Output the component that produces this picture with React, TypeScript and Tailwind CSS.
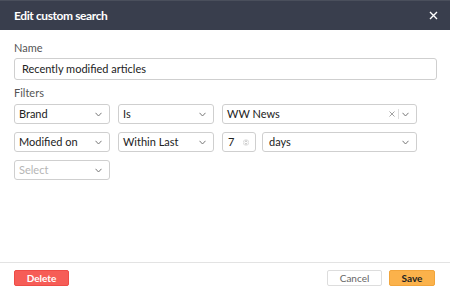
import React from "react";

const Chevron = () => (
  <svg width="7" height="5" viewBox="0 0 7 5" className="shrink-0">
    <path d="M0.5 0.8 L3.5 4 L6.5 0.8" fill="none" stroke="#777" strokeWidth="1" />
  </svg>
);

const Select = ({ value, placeholder, className }: { value?: string; placeholder?: string; className: string }) => (
  <div className={`h-[20px] flex items-center justify-between rounded-[3px] border border-[#cfcfcf] bg-white pl-[4px] pr-[7px] ${className}`}>
    <span className={value ? "text-[#222]" : "text-[#b5b5b5]"}>{value ?? placeholder}</span>
    <Chevron />
  </div>
);

export default function App() {
  return (
    <div className="w-[450px] h-[293px] bg-white flex flex-col text-[11px]" style={{ fontFamily: "Lato, 'Open Sans', sans-serif" }}>
      <div className="h-[30px] bg-[#393e4d] border-t border-[#4a4f5c] flex items-center justify-between pl-[14px] pr-[12px]">
        <span className="text-white font-bold text-[12px] tracking-[-0.4px]">Edit custom search</span>
        <svg width="9" height="9" viewBox="0 0 9 9">
          <path d="M1 1 L8 8 M8 1 L1 8" stroke="#fff" strokeWidth="1.4" />
        </svg>
      </div>
      <div className="flex-1 flex flex-col px-[14px] pt-[11px]">
        <div className="text-[#555] leading-[14px]">Name</div>
        <div className="mt-[3px] h-[22px] w-[423px] rounded-[3px] border border-[#cfcfcf] flex items-center pl-[7px] text-[#222]">
          Recently modified articles
        </div>
        <div className="mt-[6px] text-[#555] leading-[14px]">Filters</div>
        <div className="mt-[4px] flex flex-col gap-[8px]">
          <div className="flex items-center">
            <Select value="Brand" className="w-[96px]" />
            <Select value="Is" className="w-[96px] ml-[8px]" />
            <div className="ml-[8px] w-[195px] h-[20px] flex items-center justify-between rounded-[3px] border border-[#cfcfcf] pl-[4px] pr-[7px]">
              <span className="text-[#222]">WW News</span>
              <div className="flex items-center gap-[3px]">
                <svg width="6" height="6" viewBox="0 0 6 6">
                  <path d="M0.5 0.5 L5.5 5.5 M5.5 0.5 L0.5 5.5" stroke="#999" strokeWidth="0.9" />
                </svg>
                <div className="w-px h-[10px] bg-[#ddd]" />
                <Chevron />
              </div>
            </div>
          </div>
          <div className="flex items-center">
            <Select value="Modified on" className="w-[96px]" />
            <Select value="Within Last" className="w-[96px] ml-[8px]" />
            <div className="ml-[8px] w-[34px] h-[20px] flex items-center justify-between rounded-[3px] border border-[#cfcfcf] pl-[5px] pr-[6px]">
              <span className="text-[#222]">7</span>
              <svg width="6" height="9" viewBox="0 0 6 9">
                <circle cx="3" cy="4.5" r="2.8" fill="none" stroke="#ccc" strokeWidth="0.6" />
                <path d="M1.8 3.8 L3 2.7 L4.2 3.8 M1.8 5.2 L3 6.3 L4.2 5.2" fill="none" stroke="#999" strokeWidth="0.7" />
              </svg>
            </div>
            <Select value="days" className="w-[155px] ml-[6px] pl-[6px]" />
          </div>
          <div className="flex items-center">
            <Select placeholder="Select" className="w-[96px]" />
          </div>
        </div>
      </div>
      <div className="h-[31px] border-t border-[#e3e3e3] flex items-start justify-between pt-[7px] px-[14px]">
        <button className="h-[16px] w-[55px] rounded-[2px] bg-[#f65d57] border border-[#ee4c46] text-white text-[10px] font-bold flex items-center justify-center">
          Delete
        </button>
        <div className="flex items-center gap-[7px] pr-px">
          <button className="h-[16px] w-[55px] rounded-[2px] bg-white border border-[#ddd] text-[#666] text-[10px] flex items-center justify-center">
            Cancel
          </button>
          <button className="h-[16px] w-[46px] rounded-[2px] bg-[#fbb24b] border border-[#f2a53b] text-[#222] text-[10px] font-bold flex items-center justify-center">
            Save
          </button>
        </div>
      </div>
    </div>
  );
}
